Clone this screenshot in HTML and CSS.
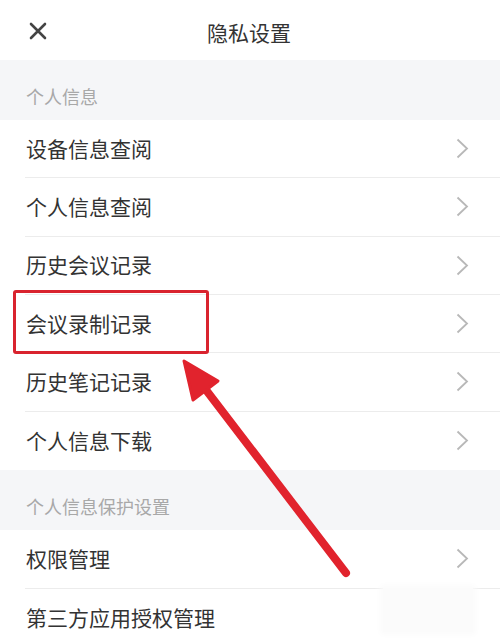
FILE: index.html
```html
<!DOCTYPE html>
<html lang="zh-CN">
<head>
<meta charset="utf-8">
<title>隐私设置</title>
<link rel="stylesheet" href="styles.css">
</head>
<body>
<div class="page">
  <header class="topbar">
    <span class="close">
      <svg width="18" height="18" viewBox="0 0 18 18"><path d="M2 2 L16 16 M16 2 L2 16" stroke="#444" stroke-width="2.6" stroke-linecap="round" fill="none"/></svg>
    </span>
    <h1 class="title">隐私设置</h1>
  </header>

  <div class="section">个人信息</div>
  <ul class="list six">
    <li class="row"><span>设备信息查阅</span><svg class="chev" width="13" height="21" viewBox="0 0 13 21"><path d="M1.5 1.5 L11 10.5 L1.5 19.5" fill="none" stroke="#b8b8b8" stroke-width="1.8"/></svg></li>
    <li class="row"><span>个人信息查阅</span><svg class="chev" width="13" height="21" viewBox="0 0 13 21"><path d="M1.5 1.5 L11 10.5 L1.5 19.5" fill="none" stroke="#b8b8b8" stroke-width="1.8"/></svg></li>
    <li class="row"><span>历史会议记录</span><svg class="chev" width="13" height="21" viewBox="0 0 13 21"><path d="M1.5 1.5 L11 10.5 L1.5 19.5" fill="none" stroke="#b8b8b8" stroke-width="1.8"/></svg></li>
    <li class="row"><span>会议录制记录</span><svg class="chev" width="13" height="21" viewBox="0 0 13 21"><path d="M1.5 1.5 L11 10.5 L1.5 19.5" fill="none" stroke="#b8b8b8" stroke-width="1.8"/></svg></li>
    <li class="row"><span>历史笔记记录</span><svg class="chev" width="13" height="21" viewBox="0 0 13 21"><path d="M1.5 1.5 L11 10.5 L1.5 19.5" fill="none" stroke="#b8b8b8" stroke-width="1.8"/></svg></li>
    <li class="row last"><span>个人信息下载</span><svg class="chev" width="13" height="21" viewBox="0 0 13 21"><path d="M1.5 1.5 L11 10.5 L1.5 19.5" fill="none" stroke="#b8b8b8" stroke-width="1.8"/></svg></li>
  </ul>

  <div class="section">个人信息保护设置</div>
  <ul class="list">
    <li class="row"><span>权限管理</span><svg class="chev" width="13" height="21" viewBox="0 0 13 21"><path d="M1.5 1.5 L11 10.5 L1.5 19.5" fill="none" stroke="#b8b8b8" stroke-width="1.8"/></svg></li>
    <li class="row last"><span>第三方应用授权管理</span></li>
  </ul>

  <div class="highlight"></div>
  <div class="watermark"></div>
  <svg class="arrow" width="500" height="642" viewBox="0 0 500 642">
    <line x1="203" y1="386" x2="346" y2="573" stroke="#e1232d" stroke-width="8" stroke-linecap="round"/>
    <path d="M184 361 L193 400 L218 381 Z" fill="#e1232d" stroke="#e1232d" stroke-width="3" stroke-linejoin="round"/>
  </svg>
</div>
</body>
</html>
```

FILE: styles.css
```css
* { box-sizing: border-box; }
html, body { margin: 0; padding: 0; background: #fff; }
body {
  font-family: "Noto Sans CJK SC", "Noto Sans", sans-serif;
  color: #333;
}
.page {
  position: relative;
  width: 500px;
  height: 642px;
  overflow: hidden;
  background: #fff;
}
.topbar {
  height: 60px;
  display: flex;
  align-items: center;
  justify-content: center;
  position: relative;
}
.close {
  position: absolute;
  left: 29px;
  top: 22px;
  width: 18px;
  height: 18px;
  display: flex;
}
.title {
  margin: 0;
  font-size: 21px;
  font-weight: 400;
  color: #333;
  padding-top: 4px;
  margin-left: -2px;
}
.section {
  height: 60px;
  background: #f5f6f8;
  color: #a8a8a8;
  font-size: 18px;
  display: flex;
  align-items: center;
  padding-left: 26px;
  padding-top: 12px;
}
.list {
  list-style: none;
  margin: 0;
  padding: 0;
}
.row {
  height: 59px;
  display: flex;
  align-items: center;
  justify-content: space-between;
  margin-left: 25px;
  padding-right: 31px;
  font-size: 21px;
  color: #333;
  border-bottom: 1px solid #ececec;
}
.six .row { height: 58.33px; }
.row.last { border-bottom: none; }
.row span { margin-left: 1px; margin-top: -2px; }
.chev { display: block; }
.highlight {
  position: absolute;
  left: 13px;
  top: 290px;
  width: 196px;
  height: 64px;
  border: 3px solid #d9232e;
  border-radius: 3px;
}
.watermark {
  position: absolute;
  left: 383px;
  top: 588px;
  width: 90px;
  height: 44px;
  background: #fbfbfb;
  box-shadow: 0 0 6px 3px #fbfbfb;
}
.arrow {
  position: absolute;
  left: 0;
  top: 0;
}
```
